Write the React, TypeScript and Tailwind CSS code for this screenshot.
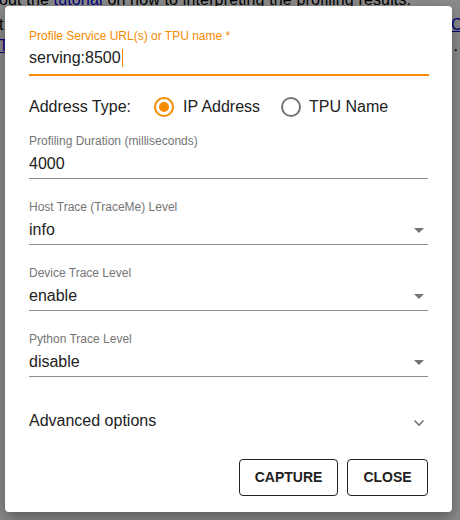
import React from "react";

function Radio({ checked }: { checked: boolean }) {
  return (
    <span
      className={`flex h-5 w-5 items-center justify-center rounded-full border-2 ${
        checked ? "border-[#f58b00]" : "border-[#757575]"
      }`}
    >
      {checked && <span className="h-2.5 w-2.5 rounded-full bg-[#f58b00]" />}
    </span>
  );
}

function Arrow() {
  return (
    <svg width="10" height="5" viewBox="0 0 10 5" className="mr-[4px]">
      <path d="M0 0 L10 0 L5 5 Z" fill="#757575" />
    </svg>
  );
}

function Field({
  label,
  value,
  select,
}: {
  label: string;
  value: string;
  select?: boolean;
}) {
  return (
    <div className="flex flex-col">
      <div className="text-[12px] leading-[16px] text-[#757575]">{label}</div>
      <div className="mt-[4px] flex h-[22px] items-center justify-between text-[16px] text-[#212121]">
        <span>{value}</span>
        {select && <Arrow />}
      </div>
      <div className="mt-[3px] h-px bg-[#8c8c8c]" />
    </div>
  );
}

export default function App() {
  return (
    <div
      className="relative h-[520px] w-[460px] overflow-hidden bg-white text-black"
      style={{ fontFamily: '"Liberation Sans", Arial, sans-serif' }}
    >
      {/* background page */}
      <div className="ml-[-1px] mt-[-11px] text-[16px] leading-[21px]">
        <div className="tracking-[0.15px]">
          out the <span className="text-[#0000ee] underline">tutorial</span> on how to interpreting the profiling results.
        </div>
        <div className="mt-[4px] flex justify-between">
          <span>t</span>
          <span className="text-[#0000ee] underline mr-[-6px]">Cl</span>
        </div>
        <div className="flex justify-between">
          <span className="text-[#0000ee] underline">T</span>
          <span className="mr-[2px]">.</span>
        </div>
      </div>
      <div className="absolute inset-0 bg-black/[0.46]" />

      {/* dialog */}
      <div className="absolute left-[5px] top-[6px] flex h-[506px] w-[447px] flex-col rounded-[4px] bg-white px-[24px] pt-[22px] shadow-[0_6px_16px_rgba(0,0,0,0.35)]">
        <div className="mr-[-1px] flex flex-col">
          <div className="text-[12px] leading-[16px] text-[#f58b00]">
            Profile Service URL(s) or TPU name *
          </div>
          <div className="mt-[3px] flex h-[22px] items-center text-[16px] text-[#212121]">
            serving:8500
            <span className="ml-px inline-block h-[18px] w-px bg-[#f58b00]" />
          </div>
          <div className="mt-[5px] h-[2px] bg-[#f58b00]" />
        </div>

        <div className="mt-[19px] flex h-[24px] items-center text-[16px] text-[#212121]">
          <span>Address Type:</span>
          <span className="ml-[23px]">
            <Radio checked />
          </span>
          <span className="ml-[9px]">IP Address</span>
          <span className="ml-[21px]">
            <Radio checked={false} />
          </span>
          <span className="ml-[8px]">TPU Name</span>
        </div>

        <div className="mt-[14px] flex flex-col gap-[20px]">
          <Field label="Profiling Duration (milliseconds)" value="4000" />
          <Field label="Host Trace (TraceMe) Level" value="info" select />
          <Field label="Device Trace Level" value="enable" select />
          <Field label="Python Trace Level" value="disable" select />
        </div>

        <div className="mt-[34px] flex h-[20px] items-center justify-between text-[16px] text-[#212121]">
          <span>Advanced options</span>
          <svg width="12" height="8" viewBox="0 0 12 8" className="mr-[3px] mt-[4px]">
            <path d="M1.5 1.5 L6 6 L10.5 1.5" fill="none" stroke="#757575" strokeWidth="1.6" />
          </svg>
        </div>

        <div className="mt-[28px] flex justify-end gap-[9px]">
          <button className="h-[37px] w-[99px] rounded-[4px] border border-[#212121] text-[14px] font-bold text-[#212121]">
            CAPTURE
          </button>
          <button className="h-[37px] w-[81px] rounded-[4px] border border-[#212121] text-[14px] font-bold text-[#212121]">
            CLOSE
          </button>
        </div>
      </div>
    </div>
  );
}
